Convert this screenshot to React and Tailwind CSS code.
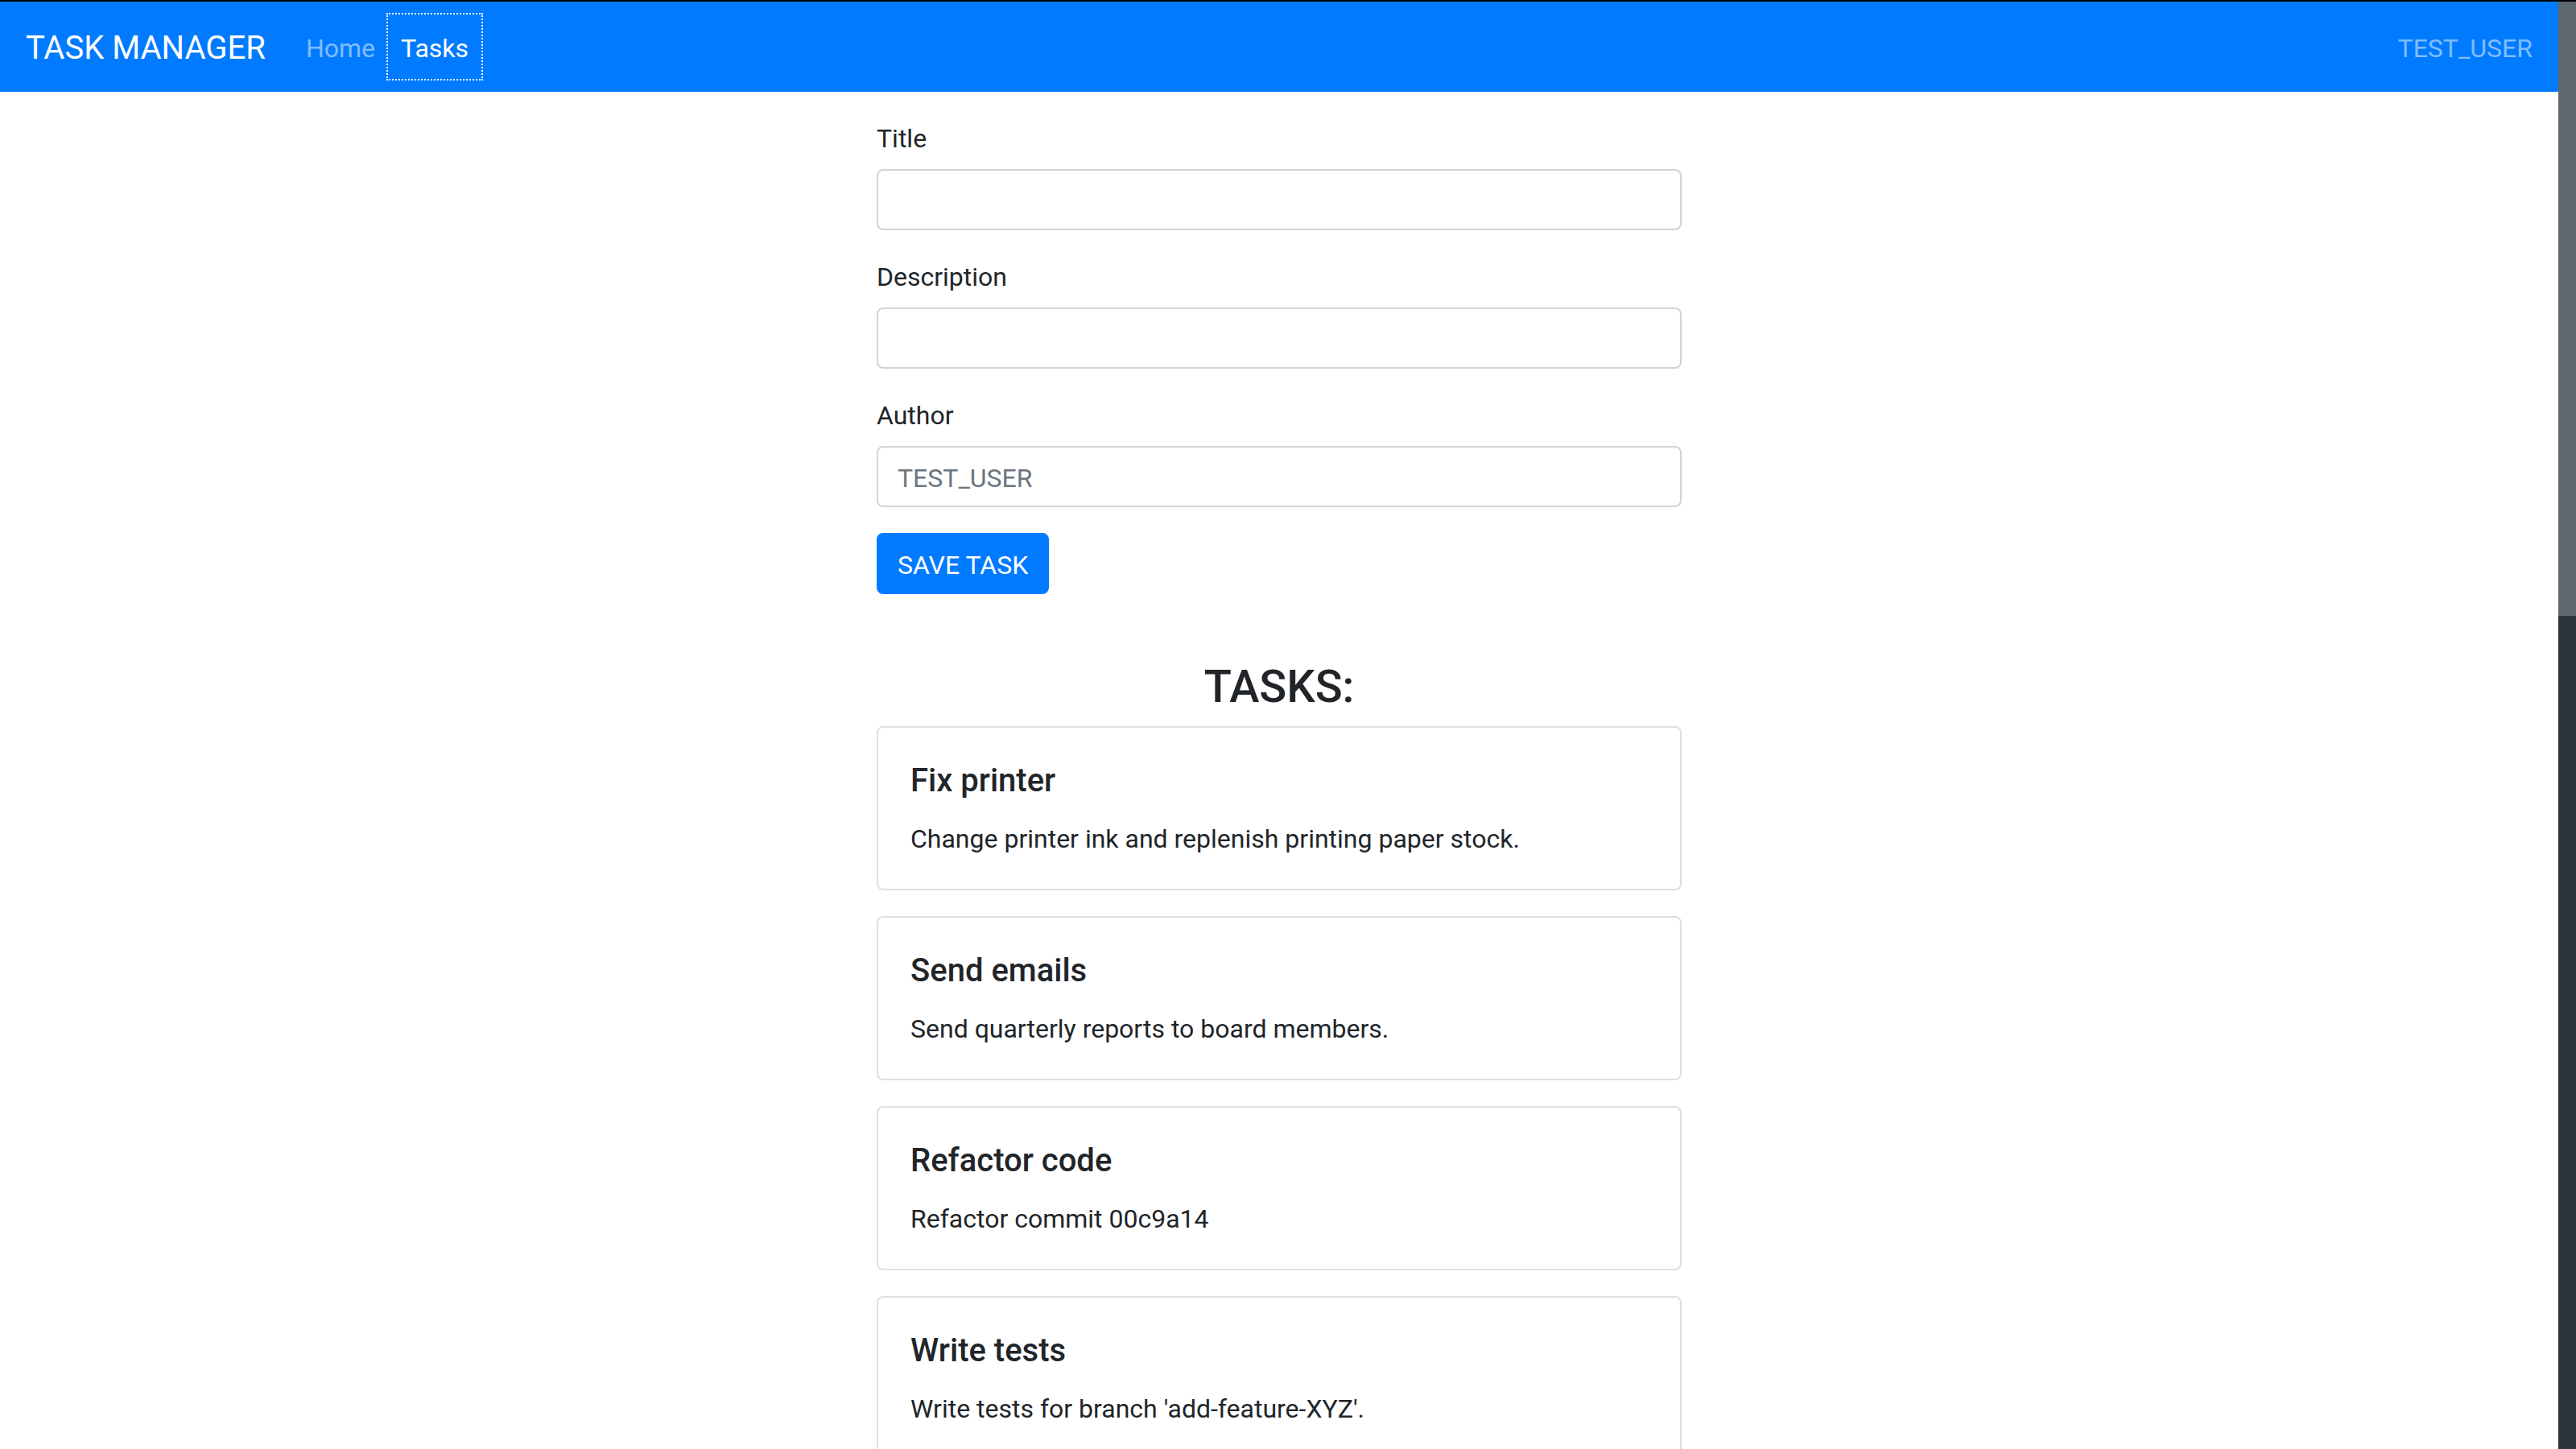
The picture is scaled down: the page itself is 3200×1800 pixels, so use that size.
import React from 'react';

const tasks = [
  { title: 'Fix printer', description: 'Change printer ink and replenish printing paper stock.' },
  { title: 'Send emails', description: 'Send quarterly reports to board members.' },
  { title: 'Refactor code', description: 'Refactor commit 00c9a14' },
  { title: 'Write tests', description: "Write tests for branch 'add-feature-XYZ'." },
];

const Field = ({ label, placeholder }) => (
  <div className="mb-8">
    <label className="block pt-[2px] mb-[14px] text-[32px] leading-[48px] text-[#212529]">{label}</label>
    <input
      type="text"
      placeholder={placeholder}
      className="block w-full h-[76px] px-6 pt-[3px] text-[32px] leading-[48px] text-[#495057] placeholder:text-[#6c757d] bg-white border-2 border-[#ced4da] rounded-[8px] outline-none"
    />
  </div>
);

const App = () => {
  return (
    <div className="h-screen w-full overflow-hidden flex flex-col bg-black font-['Roboto','Liberation_Sans',sans-serif]">
      <div className="h-[2px] shrink-0" />
      <div className="flex flex-1 min-h-0">
        <div className="flex-1 bg-white flex flex-col min-w-0">
          {/* Navbar */}
          <nav className="h-[112px] shrink-0 bg-[#007bff] flex items-center px-8">
            <span className="pt-[3px] text-[40px] leading-[60px] text-white mr-[34px]">TASK MANAGER</span>
            <a className="px-4 pt-[4px] h-[80px] flex items-center text-[32px] leading-[48px] text-white/50">Home</a>
            <a className="px-4 pt-[4px] h-[80px] flex items-center text-[32px] leading-[48px] text-white outline-2 outline-dotted outline-white">Tasks</a>
            <span className="ml-auto pt-[4px] text-[32px] leading-[48px] text-white/50">TEST_USER</span>
          </nav>

          {/* Content */}
          <div className="w-[1000px] mx-auto mt-8">
            <form onSubmit={(e) => e.preventDefault()}>
              <Field label="Title" />
              <Field label="Description" />
              <Field label="Author" placeholder="TEST_USER" />
              <button
                type="submit"
                className="h-[76px] px-6 pt-[3px] text-[32px] leading-[48px] text-white bg-[#007bff] border-2 border-[#007bff] rounded-[8px]"
              >
                SAVE TASK
              </button>
            </form>

            <h3 className="mt-[80px] pt-[2px] mb-[15px] text-center text-[56px] leading-[1.2] font-medium text-[#212529]">TASKS:</h3>

            <div className="flex flex-col gap-8">
              {tasks.map((task) => (
                <div key={task.title} className="border-2 border-[rgba(0,0,0,0.125)] rounded-[8px] px-10 pt-[42px] pb-[38px]">
                  <h5 className="text-[40px] leading-[48px] font-medium text-[#212529] mb-6">{task.title}</h5>
                  <p className="text-[32px] leading-[48px] text-[#212529]">{task.description}</p>
                </div>
              ))}
            </div>
          </div>
        </div>

        {/* Scrollbar */}
        <div className="w-[22px] shrink-0 bg-[#29353b] flex flex-col">
          <div className="h-[763px] bg-[#5e696f]" />
        </div>
      </div>
    </div>
  );
};

export default App;
